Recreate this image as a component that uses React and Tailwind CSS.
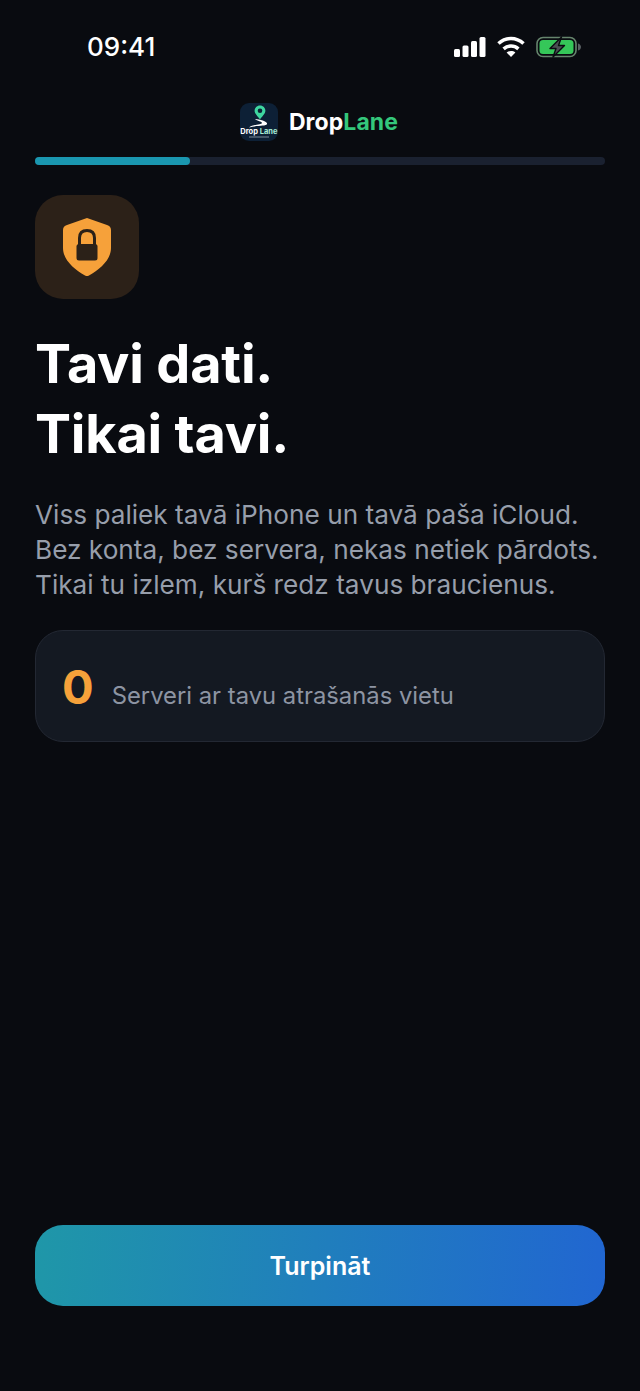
import React from 'react';

function SignalIcon() {
  return (
    <svg width="34" height="22" viewBox="0 0 34 22" fill="#fff">
      <rect x="1" y="13" width="6" height="8" rx="1.5" />
      <rect x="9.5" y="9.5" width="6" height="11.5" rx="1.5" />
      <rect x="18" y="5" width="6" height="16" rx="1.5" />
      <rect x="26.5" y="1" width="6" height="20" rx="1.5" />
    </svg>
  );
}

function WifiIcon() {
  return (
    <svg width="28" height="22" viewBox="0 0 28 22" fill="none" stroke="#fff" strokeWidth="3.6">
      <path d="M1.5 7.5 C8.8 0.8 19.2 0.8 26.5 7.5" />
      <path d="M6.6 12.8 C11 9 17 9 21.4 12.8" />
      <path d="M14 21 L9.6 16.4 C12.2 14.5 15.8 14.5 18.4 16.4 Z" fill="#fff" stroke="none" />
    </svg>
  );
}

function BatteryIcon() {
  return (
    <svg width="46" height="22" viewBox="0 0 46 22">
      <rect x="2" y="1.5" width="39" height="19" rx="6" fill="none" stroke="#66856d" strokeWidth="1.6" />
      <rect x="4.5" y="4" width="34" height="14" rx="3.5" fill="#35c759" />
      <path d="M43 7.5 C45 8 46 9.5 46 11 C46 12.5 45 14 43 14.5 Z" fill="#5a5f63" />
      <path
        d="M26.5 1 L15 12.5 H21 L18 21 L29.5 9.5 H23.5 Z"
        fill="#4a4e52"
        stroke="#0a0c11"
        strokeWidth="1.4"
        strokeLinejoin="round"
      />
    </svg>
  );
}

function StatusBar() {
  return (
    <div className="flex items-center justify-between h-[22px] pl-[87px] pr-[59px] mt-[36px]">
      <span className="text-[26px] leading-none font-medium text-white">09:41</span>
      <div className="flex items-center gap-[10px]">
        <SignalIcon />
        <WifiIcon />
        <BatteryIcon />
      </div>
    </div>
  );
}

function AppLogo() {
  return (
    <div className="relative w-[38px] h-[38px] rounded-[9px] bg-[#0d2036] overflow-hidden">
      <svg className="absolute left-0 top-0" width="38" height="38" viewBox="0 0 38 38">
        <path
          d="M20 2.5 C16.8 2.5 14.6 5 14.6 7.8 C14.6 10.8 18 13.5 20 16.5 C22 13.5 25.4 10.8 25.4 7.8 C25.4 5 23.2 2.5 20 2.5 Z"
          fill="#3ed6a0"
        />
        <circle cx="20" cy="7.8" r="2.3" fill="#0d2036" />
        <path d="M15 16 C20 16.5 28 18.5 27 21 C26 23.5 17 22 9 24.5 C12 21.5 22 21.5 22 20 C22 18.5 17 18 15 16 Z" fill="#fff" />
        <rect x="9" y="33.5" width="20" height="1" fill="#7d8a98" />
      </svg>
      <span className="absolute left-0 right-0 top-[24.5px] text-center text-[7.5px] leading-[8px] font-bold text-white whitespace-nowrap">
        Drop <span className="text-[#a9ecd6]">Lane</span>
      </span>
    </div>
  );
}

function ShieldLockIcon() {
  return (
    <svg width="50" height="60" viewBox="0 0 50 60">
      <path
        d="M25 1 L45 8 C47.5 8.8 49 10.5 49 13 V31 C49 43 38 52 27 58.5 C25.6 59.2 24.4 59.2 23 58.5 C12 52 1 43 1 31 V13 C1 10.5 2.5 8.8 5 8 Z"
        fill="#f6a13a"
      />
      <path
        d="M17.5 28 V21 C17.5 16 20.5 13.5 25 13.5 C29.5 13.5 32.5 16 32.5 21 V28"
        fill="none"
        stroke="#2b2118"
        strokeWidth="3"
      />
      <rect x="14.5" y="27" width="21" height="16.5" rx="2.5" fill="#2b2118" />
    </svg>
  );
}

export default function App() {
  return (
    <div
      className="w-[640px] h-[1391px] bg-[#090b10] flex flex-col"
      style={{ fontFamily: 'Inter, "Noto Sans", sans-serif' }}
    >
      <StatusBar />

      <div className="flex items-center justify-center gap-[11px] mt-[45px] h-[38px] pr-[2px]">
        <AppLogo />
        <span className="text-[23px] font-bold text-white leading-none tracking-[0.1px]">
          Drop<span className="text-[#34c77b]">Lane</span>
        </span>
      </div>

      <div className="mx-[35px] mt-[16px] h-[8px] rounded-full bg-[#1a2130]">
        <div className="w-[155px] h-full rounded-full bg-[#1a97b0]" />
      </div>

      <div className="mx-[35px] mt-[30px] w-[104px] h-[104px] rounded-[28px] bg-[#2c2118] flex items-center justify-center">
        <ShieldLockIcon />
      </div>

      <h1 className="mx-[35px] mt-[30px] text-[54px] leading-[70px] font-bold text-white tracking-[-0.2px]">
        Tavi dati.
        <br />
        Tikai tavi.
      </h1>

      <p className="mx-[35px] mt-[28px] text-[26.2px] leading-[35px] text-[#979eab] whitespace-nowrap">
        Viss paliek tavā iPhone un tavā paša iCloud.
        <br />
        Bez konta, bez servera, nekas netiek pārdots.
        <br />
        Tikai tu izlem, kurš redz tavus braucienus.
      </p>

      <div className="mx-[35px] mt-[28px] h-[112px] rounded-[28px] bg-[#141922] border border-[#232833] flex items-center px-[26px]">
        <div className="flex items-baseline gap-[18px]">
          <span className="text-[47px] leading-none font-bold text-[#f6a13a]">0</span>
          <span className="text-[23.8px] leading-none text-[#8d94a2]">Serveri ar tavu atrašanās vietu</span>
        </div>
      </div>

      <div className="flex-1" />

      <button className="mx-[35px] mb-[85px] h-[81px] rounded-[28px] bg-[linear-gradient(95deg,#1f97a8,#2166d1)] text-white text-[25px] font-semibold pt-[2px]">
        Turpināt
      </button>
    </div>
  );
}
